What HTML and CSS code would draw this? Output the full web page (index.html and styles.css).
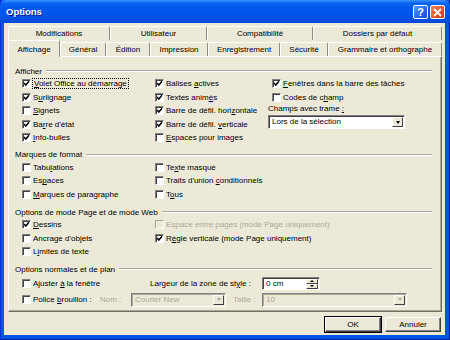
FILE: index.html
```html
<!DOCTYPE html>
<html lang="fr">
<head>
    <meta charset="UTF-8">
    <title>Options</title>
    <link rel="stylesheet" href="styles.css">
</head>
<body>
    <div class="window">
        <div class="titlebar">
            <span class="title">Options</span>
            <div class="caption-buttons">
                <span class="cap help">?</span>
                <span class="cap close">
                    <svg width="9" height="9" viewBox="0 0 9 9"><path d="M1 1 L8 8 M8 1 L1 8" stroke="#fff" stroke-width="1.8" fill="none"/></svg>
                </span>
            </div>
        </div>

        <div class="client">
            <div class="tab-row back">
                <div class="tab">Modifications</div>
                <div class="tab">Utilisateur</div>
                <div class="tab">Compatibilité</div>
                <div class="tab">Dossiers par défaut</div>
            </div>
            <div class="tab-row front">
                <div class="tab active">Affichage</div>
                <div class="tab">Général</div>
                <div class="tab">Édition</div>
                <div class="tab">Impression</div>
                <div class="tab">Enregistrement</div>
                <div class="tab">Sécurité</div>
                <div class="tab">Grammaire et orthographe</div>
            </div>

            <div class="panel">
                <!-- Afficher -->
                <div class="legend">Afficher</div>
                <div class="opts three">
                    <label class="check"><span class="box on"></span><span class="focus"><u>V</u>olet Office au démarrage</span></label>
                    <label class="check"><span class="box on"></span><span>S<u>u</u>rlignage</span></label>
                    <label class="check"><span class="box"></span><span><u>S</u>ignets</span></label>
                    <label class="check"><span class="box on"></span><span>Ba<u>r</u>re d'état</span></label>
                    <label class="check"><span class="box on"></span><span><u>I</u>nfo-bulles</span></label>

                    <label class="check"><span class="box on"></span><span>Balises <u>a</u>ctives</span></label>
                    <label class="check"><span class="box on"></span><span>Textes anim<u>é</u>s</span></label>
                    <label class="check"><span class="box on"></span><span>Barre de défil. hori<u>z</u>ontale</span></label>
                    <label class="check"><span class="box on"></span><span>Barre de défil. <u>v</u>erticale</span></label>
                    <label class="check"><span class="box"></span><span><u>E</u>spaces pour images</span></label>

                    <label class="check indent"><span class="box on"></span><span><u>F</u>enêtres dans la barre des tâches</span></label>
                    <label class="check indent"><span class="box"></span><span>Codes de c<u>h</u>amp</span></label>
                    <div class="field-trame">
                        <div class="field-label">Champs avec trame <u>:</u></div>
                        <div class="combo">
                            <span class="value">Lors de la sélection</span>
                            <span class="drop"><span class="arrow"></span></span>
                        </div>
                    </div>
                </div>

                <!-- Marques de format -->
                <div class="legend gap-a">Marques de format</div>
                <div class="opts two">
                    <label class="check"><span class="box"></span><span>Tabu<u>l</u>ations</span></label>
                    <label class="check"><span class="box"></span><span>Es<u>p</u>aces</span></label>
                    <label class="check"><span class="box"></span><span><u>M</u>arques de paragraphe</span></label>
                    <label class="check"><span class="box"></span><span>Te<u>x</u>te masqué</span></label>
                    <label class="check"><span class="box"></span><span>Traits d'union <u>c</u>onditionnels</span></label>
                    <label class="check"><span class="box"></span><span>T<u>o</u>us</span></label>
                </div>

                <!-- Options de mode Page et de mode Web -->
                <div class="legend gap-b">Options de mode Page et de mode Web</div>
                <div class="opts two">
                    <label class="check"><span class="box on"></span><span><u>D</u>essins</span></label>
                    <label class="check"><span class="box"></span><span>Ancrage d'ob<u>j</u>ets</span></label>
                    <label class="check"><span class="box"></span><span>L<u>i</u>mites de texte</span></label>
                    <label class="check disabled"><span class="box"></span><span>Espace entre pages (mode Page uniquement)</span></label>
                    <label class="check"><span class="box on"></span><span>R<u>è</u>gle verticale (mode Page uniquement)</span></label>
                </div>

                <!-- Options normales et de plan -->
                <div class="legend gap-c">Options normales et de plan</div>
                <div class="plan">
                    <div class="plan-row first">
                        <label class="check col-a"><span class="box"></span><span>Ajuster <u>à</u> la fenêtre</span></label>
                        <span class="col-b">Largeur de la zone de st<u>y</u>le :</span>
                        <div class="spin">
                            <span class="value">0 cm</span>
                            <span class="spin-btns">
                                <span class="spin-btn"><span class="arrow up"></span></span>
                                <span class="spin-btn"><span class="arrow"></span></span>
                            </span>
                        </div>
                    </div>
                    <div class="plan-row second">
                        <label class="check col-c"><span class="box"></span><span>Police <u>b</u>rouillon :</span></label>
                        <span class="muted col-d">Nom :</span>
                        <div class="combo off name">
                            <span class="value">Courier New</span>
                            <span class="drop"><span class="arrow"></span></span>
                        </div>
                        <span class="muted col-e">Taille :</span>
                        <div class="combo off size">
                            <span class="value">10</span>
                            <span class="drop"><span class="arrow"></span></span>
                        </div>
                    </div>
                </div>
            </div>

            <div class="actions">
                <button class="btn default">OK</button>
                <button class="btn">Annuler</button>
            </div>
        </div>
    </div>
</body>
</html>
```

FILE: styles.css
```css
body {
    margin: 0;
    font-family: "Liberation Sans", Arial, sans-serif;
    font-size: 8px;
    color: #000;
}

.window {
    width: 450px;
    height: 340px;
    display: flex;
    flex-direction: column;
    background: #0055e5;
    box-shadow: inset 1px 0 #0831d9, inset -1px 0 #001ea0, inset 0 -1px #001ea0;
}

/* title bar */
.titlebar {
    height: 23px;
    display: flex;
    align-items: center;
    justify-content: space-between;
    padding: 0 5px 0 6px;
    background: linear-gradient(to bottom, #3d95ff 0, #0a66f0 3px, #0058ee 8px, #0054e8 16px, #0049d6 23px);
    border-radius: 6px 6px 0 0;
}

.title {
    color: #fff;
    font-weight: bold;
    font-size: 9.5px;
    text-shadow: 1px 1px #0a1e8c;
}

.caption-buttons {
    display: flex;
    gap: 2px;
    margin-top: 1px;
}

.cap {
    width: 15px;
    height: 14px;
    box-sizing: border-box;
    border: 1px solid #fff;
    border-radius: 2px;
    display: flex;
    align-items: center;
    justify-content: center;
    color: #fff;
    font-weight: bold;
    font-size: 11px;
}

.help {
    background: linear-gradient(135deg, #5a9cff, #2663e6 60%, #1a4fd0);
}

.close {
    background: linear-gradient(135deg, #f0885e, #e0501e 60%, #c73a10);
}

/* dialog body */
.client {
    flex: 1;
    margin: 0 5px 5px 4px;
    padding: 3px 3px 0 4px;
    background: #ece9d8;
    display: flex;
    flex-direction: column;
}

.tab-row {
    display: grid;
}

.tab-row.back {
    height: 14px;
    grid-template-columns: 102px 97px 106px 1fr;
}

.tab-row.front {
    height: 16px;
    align-items: end;
    grid-template-columns: 52px 46px 44px 58px 72px 48px 1fr;
}

.tab {
    height: 14px;
    box-sizing: border-box;
    display: flex;
    align-items: center;
    justify-content: center;
    border-top: 1px solid #fff;
    border-left: 1px solid #fff;
    border-right: 1px solid #8e8b7c;
    border-radius: 2px 2px 0 0;
    background: #ece9d8;
    white-space: nowrap;
}

.tab.active {
    height: 17px;
    margin-bottom: -1px;
    position: relative;
    z-index: 1;
}

.panel {
    height: 256px;
    box-sizing: border-box;
    border-top: 1px solid #fff;
    border-left: 1px solid #fff;
    border-right: 1px solid #716f64;
    border-bottom: 1px solid #716f64;
    box-shadow: inset -1px -1px #aca899;
    padding-top: 8px;
}

/* group headers */
.legend {
    height: 12px;
    display: flex;
    align-items: center;
    padding: 0 9px 0 6px;
    white-space: nowrap;
}

.legend::after {
    content: '';
    flex: 1;
    margin-left: 4px;
    border-top: 1px solid #aca899;
    border-bottom: 1px solid #fff;
}

.gap-a { margin-top: 4px; }
.gap-b { margin-top: 5px; }
.gap-c { margin-top: 4.5px; }

.opts {
    display: grid;
    grid-auto-flow: column;
    padding-left: 13px;
}

.opts.three {
    grid-template-columns: 133px 113px 1fr;
    grid-template-rows: repeat(5, 13.5px);
}

.opts.two {
    grid-template-columns: 133px 1fr;
    grid-template-rows: repeat(3, 13.5px);
}

.check {
    display: flex;
    align-items: center;
    gap: 2px;
    white-space: nowrap;
}

.check.indent {
    margin-left: 4px;
}

.check.disabled {
    color: #aca899;
}

.box {
    width: 9px;
    height: 9px;
    box-sizing: border-box;
    border: 1px solid;
    border-color: #808080 #fff #fff #808080;
    box-shadow: inset 1px 1px #404040;
    background: #fff;
    flex: none;
}

.box.on {
    background: #fff url("data:image/svg+xml,%3Csvg xmlns='http://www.w3.org/2000/svg' width='7' height='7' viewBox='0 0 7 7'%3E%3Cpath d='M1 3 L2.8 5 L6 1.2' stroke='%23000' stroke-width='1.5' fill='none'/%3E%3C/svg%3E") no-repeat 0 0;
}

.disabled .box {
    background: #ece9d8;
    border-color: #aca899 #fff #fff #aca899;
    box-shadow: none;
}

.focus {
    outline: 1px dotted #000;
    padding: 0 1px;
}

.field-trame {
    grid-column: 3;
    grid-row: 3 / span 3;
    display: flex;
    flex-direction: column;
}

.field-label {
    height: 11px;
    line-height: 10px;
}

/* combo boxes */
.combo {
    display: flex;
    height: 14px;
    width: 137px;
    box-sizing: border-box;
    border: 1px solid;
    border-color: #808080 #fff #fff #808080;
    box-shadow: inset 1px 1px #404040;
    background: #fff;
}

.combo .value,
.spin .value {
    flex: 1;
    padding-left: 3px;
    line-height: 12px;
    white-space: nowrap;
}

.drop {
    width: 11px;
    margin: 1px;
    box-sizing: border-box;
    background: #ece9d8;
    border: 1px solid;
    border-color: #fff #404040 #404040 #fff;
    display: flex;
    align-items: center;
    justify-content: center;
}

.arrow {
    width: 0;
    height: 0;
    border-left: 2.5px solid transparent;
    border-right: 2.5px solid transparent;
    border-top: 3px solid #000;
}

.arrow.up {
    border-top: 0;
    border-bottom: 3px solid #000;
}

.combo.off {
    background: #ece9d8;
    color: #aca899;
    box-shadow: inset 1px 1px #aca899;
}

.combo.off .arrow {
    border-top-color: #aca899;
}

.combo.name { width: 95px; }
.combo.size { width: 145px; }

/* normal view options */
.plan {
    padding-left: 13px;
}

.plan-row {
    display: flex;
    align-items: center;
    white-space: nowrap;
}

.plan-row.first {
    height: 15px;
    margin-top: 0.5px;
}

.plan-row.second {
    height: 15px;
    margin-top: 1.5px;
}

.muted {
    color: #aca899;
}

.col-a { width: 128px; }
.col-b { width: 112px; }
.col-c { width: 78px; }
.col-d { width: 31px; }
.col-e { width: 29px; margin-left: 7px; }

.spin {
    display: flex;
    width: 58px;
    height: 13px;
    box-sizing: border-box;
    border: 1px solid;
    border-color: #808080 #fff #fff #808080;
    box-shadow: inset 1px 1px #404040;
    background: #fff;
}

.spin-btns {
    width: 12px;
    margin: 1px 1px 0 0;
    display: flex;
    flex-direction: column;
}

.spin-btn {
    flex: 1;
    box-sizing: border-box;
    background: #ece9d8;
    border: 1px solid;
    border-color: #fff #404040 #404040 #fff;
    display: flex;
    align-items: center;
    justify-content: center;
}

.spin-btn .arrow {
    border-left-width: 2px;
    border-right-width: 2px;
    border-top-width: 2px;
}

.spin-btn .arrow.up {
    border-bottom-width: 2px;
}

/* dialog buttons */
.actions {
    display: flex;
    justify-content: flex-end;
    gap: 4px;
    margin-top: 5px;
    padding-right: 1px;
}

.btn {
    width: 56px;
    height: 15px;
    box-sizing: border-box;
    padding: 0;
    font: inherit;
    color: #000;
    background: #ece9d8;
    border: 1px solid;
    border-color: #fff #404040 #404040 #fff;
    box-shadow: inset -1px -1px #808080;
}

.btn.default {
    outline: 1px solid #000;
}
```
